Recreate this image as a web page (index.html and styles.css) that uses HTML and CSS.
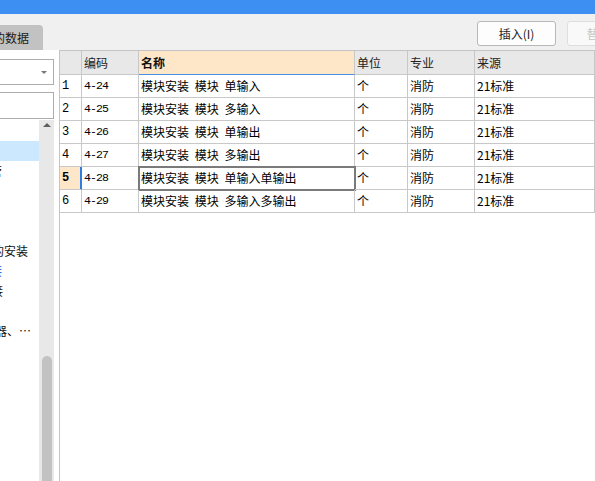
FILE: index.html
```html
<!DOCTYPE html>
<html lang="zh-CN">
<head>
<meta charset="utf-8">
<title>定额数据</title>
<link rel="stylesheet" href="styles.css">
</head>
<body>
<div class="app">
  <div class="titlebar"></div>
  <div class="toolbar">
    <div class="tab"><span class="tab-label">的数据</span></div>
    <div class="actions">
      <button class="btn">插入(I)</button>
      <button class="btn btn-disabled">替换(R)</button>
    </div>
  </div>
  <div class="main">
    <aside class="side">
      <div class="combo"><span class="combo-arrow"></span></div>
      <div class="search"></div>
      <div class="tree">
        <div class="tree-list">
          <div class="tree-item"></div>
          <div class="tree-item selected"></div>
          <div class="tree-item"><span class="clip-10">管</span></div>
          <div class="tree-item"></div>
          <div class="tree-item"></div>
          <div class="tree-item"></div>
          <div class="tree-item"><span class="clip-8">的安装</span></div>
          <div class="tree-item link"><span class="clip-10">接</span></div>
          <div class="tree-item"><span class="clip-9">接</span></div>
          <div class="tree-item"></div>
          <div class="tree-item"><span class="clip-5">器、…</span></div>
        </div>
        <div class="vscroll"><span class="arrow-up"></span><span class="thumb"></span></div>
      </div>
    </aside>
    <section class="grid">
      <div class="row head">
        <div class="cell num"></div>
        <div class="cell">编码</div>
        <div class="cell name active">名称</div>
        <div class="cell">单位</div>
        <div class="cell">专业</div>
        <div class="cell">来源</div>
      </div>
      <div class="row">
        <div class="cell num">1</div>
        <div class="cell code">4-24</div>
        <div class="cell name">模块安装 模块 单输入</div>
        <div class="cell">个</div>
        <div class="cell">消防</div>
        <div class="cell src">21标准</div>
      </div>
      <div class="row">
        <div class="cell num">2</div>
        <div class="cell code">4-25</div>
        <div class="cell name">模块安装 模块 多输入</div>
        <div class="cell">个</div>
        <div class="cell">消防</div>
        <div class="cell src">21标准</div>
      </div>
      <div class="row">
        <div class="cell num">3</div>
        <div class="cell code">4-26</div>
        <div class="cell name">模块安装 模块 单输出</div>
        <div class="cell">个</div>
        <div class="cell">消防</div>
        <div class="cell src">21标准</div>
      </div>
      <div class="row">
        <div class="cell num">4</div>
        <div class="cell code">4-27</div>
        <div class="cell name">模块安装 模块 多输出</div>
        <div class="cell">个</div>
        <div class="cell">消防</div>
        <div class="cell src">21标准</div>
      </div>
      <div class="row current">
        <div class="cell num">5</div>
        <div class="cell code">4-28</div>
        <div class="cell name focus">模块安装 模块 单输入单输出</div>
        <div class="cell">个</div>
        <div class="cell">消防</div>
        <div class="cell src">21标准</div>
      </div>
      <div class="row">
        <div class="cell num">6</div>
        <div class="cell code">4-29</div>
        <div class="cell name">模块安装 模块 多输入多输出</div>
        <div class="cell">个</div>
        <div class="cell">消防</div>
        <div class="cell src">21标准</div>
      </div>
    </section>
  </div>
</div>
</body>
</html>
```
FILE: styles.css
```css
* { box-sizing: border-box; }
html, body { margin: 0; padding: 0; }
body {
  width: 595px;
  height: 481px;
  overflow: hidden;
  background: #f0f0f0;
  font-family: "Noto Sans CJK SC", "Microsoft YaHei", sans-serif;
  font-size: 12px;
  color: #000;
}
.app { display: flex; flex-direction: column; height: 481px; }
.titlebar { height: 14px; background: #3d8ff1; flex-shrink: 0; }
.toolbar {
  height: 36px;
  display: flex;
  align-items: flex-start;
  overflow: hidden;
  flex-shrink: 0;
}
.tab {
  width: 43px;
  height: 25px;
  margin-top: 11px;
  background: #c2c2c2;
  border-top-right-radius: 4px;
  overflow: hidden;
  white-space: nowrap;
  display: flex;
  align-items: center;
  flex-shrink: 0;
  color: #1a1a1a;
}
.tab-label { margin-left: -7px; }
.actions {
  display: flex;
  gap: 11px;
  margin-left: 434px;
  margin-top: 7px;
  flex-shrink: 0;
}
.btn {
  width: 79px;
  height: 25px;
  padding: 0;
  font-family: "Noto Sans CJK SC", sans-serif;
  font-size: 12px;
  color: #222;
  background: #fdfdfd;
  border: 1px solid #b8b8b8;
  border-radius: 3px;
}
.btn-disabled { color: #c6c6c6; border-color: #dedede; background: #f9f9f9; }

.main { flex: 1; display: flex; min-height: 0; }
.side {
  width: 59px;
  background: #fff;
  display: flex;
  flex-direction: column;
  flex-shrink: 0;
}
.combo {
  margin: 9px 5px 0 -4px;
  height: 26px;
  border: 1px solid #acacac;
  background: #fff;
  display: flex;
  align-items: center;
  justify-content: flex-end;
  padding-right: 6px;
}
.combo-arrow {
  width: 0; height: 0;
  border-left: 3px solid transparent;
  border-right: 3px solid transparent;
  border-top: 3px solid #777;
}
.search {
  margin: 7px 5px 0 -4px;
  height: 27px;
  border: 1px solid #acacac;
  background: #fff;
}
.tree { flex: 1; display: flex; margin-top: 1px; margin-right: 5px; min-height: 0; }
.tree-list { flex: 1; padding-top: 1px; overflow: hidden; }
.tree-item {
  height: 20px;
  line-height: 20px;
  white-space: nowrap;
  overflow: hidden;
  color: #111;
}
.tree-item span { display: inline-block; }
.tree-item.selected { background: #cce8ff; }
.tree-item.link { color: #1e4fc8; }
.clip-10 { margin-left: -10px; }
.clip-9 { margin-left: -9px; }
.clip-8 { margin-left: -8px; }
.clip-5 { margin-left: -5px; }
.vscroll {
  width: 15px;
  background: #e8e8e8;
  display: flex;
  flex-direction: column;
  justify-content: space-between;
  align-items: center;
}
.arrow-up {
  margin-top: 3px;
  width: 0; height: 0;
  border-left: 4px solid transparent;
  border-right: 4px solid transparent;
  border-bottom: 4px solid #606060;
}
.thumb {
  width: 10px;
  height: 125px;
  background: #c2c2c2;
  border-radius: 5px 5px 0 0;
}

.grid {
  flex: 1;
  background: #fff;
  border-left: 1px solid #c4c4c4;
  border-top: 1px solid #c4c4c4;
  overflow: hidden;
}
.row {
  display: grid;
  grid-template-columns: 22px 57px 216px 53px 67px 1fr;
  height: 23px;
}
.row.head { height: 24px; }
.cell {
  border-right: 1px solid #c8c8c8;
  border-bottom: 1px solid #c8c8c8;
  padding-left: 2px;
  line-height: 22px;
  white-space: nowrap;
  overflow: hidden;
}
.head .cell { background: #e8e8e8; line-height: 23px; color: #222; }
.head .cell.active { background: #fee6c8; font-weight: bold; border-bottom-color: #4a90e2; color: #111; }
.name { word-spacing: 3px; }
.num {
  font-family: "Liberation Mono", monospace;
  font-size: 12px;
}
.code {
  font-family: "Liberation Mono", monospace;
  font-size: 11.5px;
  letter-spacing: -0.9px;
}
.current .num {
  background: #fee6c8;
  font-weight: bold;
  border-right-color: #2f7de1;
  box-shadow: inset -1px 0 0 #2f7de1;
}
.focus {
  outline: 2px solid #7a7a7a;
  outline-offset: -1px;
}
```
